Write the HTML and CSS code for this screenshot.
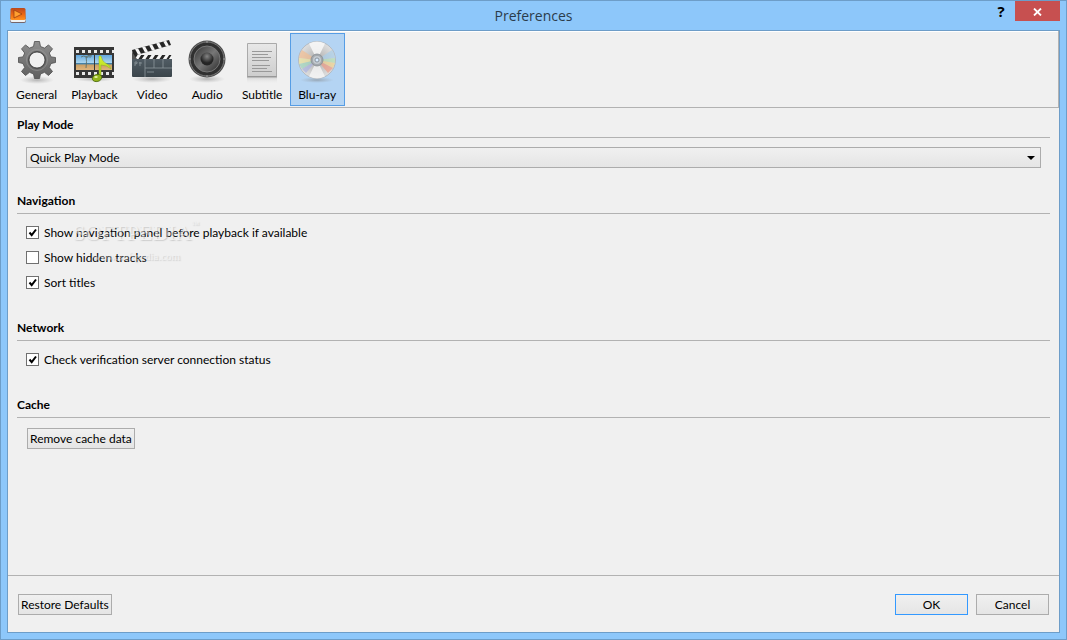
FILE: index.html
```html
<!DOCTYPE html>
<html lang="en">
<head>
  <meta charset="UTF-8" />
  <meta name="viewport" content="width=device-width, initial-scale=1.0"/>
  <title>Preferences</title>
  <link rel="stylesheet" href="styles.css">
</head>
<body>
  <header class="titlebar">
    <svg class="app-icon" width="18" height="18" viewBox="0 0 18 18">
      <defs>
        <linearGradient id="appFill" x1="0" y1="0" x2="0" y2="1">
          <stop offset="0" stop-color="#b9481f"/><stop offset="0.55" stop-color="#ee6a12"/><stop offset="1" stop-color="#ff9420"/>
        </linearGradient>
      </defs>
      <path d="M2 4h14l1 11q0 2-2 2H3q-2 0-2-2z" fill="#75656a"/>
      <path d="M1.500 13h15v1.500q0 1.500-1.500 1.500H3q-1.500 0-1.500-1.500z" fill="#eef2f4"/>
      <rect x="1.500" y="2" width="15" height="12" rx="1.500" fill="url(#appFill)"/>
      <path d="M5 4v8l8-4z" fill="#ffa030" stroke="#92380f" stroke-width=".7"/>
    </svg>
    <h1 class="title">Preferences</h1>
    <div class="window-buttons">
      <button class="help" aria-label="Help">?</button>
      <button class="close" aria-label="Close">
        <svg width="9" height="8" viewBox="0 0 9 8"><path d="M1 .5l7 7M8 .5l-7 7" stroke="#fff" stroke-width="1.800"/></svg>
      </button>
    </div>
  </header>

  <main class="client">
    <nav class="toolbar">
      <button class="tab">
        <svg width="44" height="48" viewBox="0 0 44 48">
          <defs>
            <linearGradient id="steel" x1="0" y1="0" x2="0" y2="1"><stop offset="0" stop-color="#8f8f8f"/><stop offset="1" stop-color="#5f5f5f"/></linearGradient>
            <radialGradient id="shade"><stop offset="0" stop-color="#777" stop-opacity=".5"/><stop offset="1" stop-color="#999" stop-opacity="0"/></radialGradient>
          </defs>
          <ellipse cx="22" cy="43" rx="17" ry="4" fill="url(#shade)"/>
          <path d="M19.500 4.500h5l1 5 4 1.600 4-3.200 4 4-3.200 4.100 1.700 3.900 4.500.6v5l-4.500 1-1.700 4 3.200 4-4 4-4-3.200-4 1.700-1 4.500h-5l-1-4.500-4-1.700-4 3.200-4-4 3.200-4-1.700-4-4.500-1v-5l4.500-.6 1.700-3.900-3.200-4.100 4-4 4 3.200 4-1.600zM22 15a8 8 0 1 0 0 16a8 8 0 1 0 0-16z" fill="url(#steel)" stroke="#4d4d4d" stroke-width=".8" fill-rule="evenodd"/>
          <circle cx="22" cy="23" r="8.500" fill="none" stroke="#4d4d4d"/>
          <circle cx="22" cy="23" r="10.500" fill="none" stroke="#a0a0a0" stroke-opacity=".5"/>
        </svg>
        <span>General</span>
      </button>
      <button class="tab">
        <svg width="44" height="48" viewBox="0 0 44 48">
          <defs>
            <linearGradient id="sky" x1="0" y1="0" x2="0" y2="1"><stop offset="0" stop-color="#64a8df"/><stop offset=".5" stop-color="#a8d4ee"/><stop offset=".56" stop-color="#3c7fab"/><stop offset=".68" stop-color="#cca167"/><stop offset="1" stop-color="#dfb57d"/></linearGradient>
            <linearGradient id="note" x1="0" y1="0" x2="0" y2="1"><stop offset="0" stop-color="#d8f532"/><stop offset="1" stop-color="#a5cc1e"/></linearGradient>
          </defs>
          <ellipse cx="22" cy="42" rx="20" ry="3" fill="url(#shade)"/>
          <path d="M2 10h40v31H2z" fill="#363636"/>
          <path d="M4 14.500h38M4 36.500h38" stroke="#e8e8e8" stroke-width="3" stroke-dasharray="3 3"/>
          <path d="M4 18h18v15H4zM23 18h17v15H23z" fill="url(#sky)"/>
          <path d="M14 31q1-7 0-12M9 20q3-2 5 0q3-3 6-1M19 20q-3-1-5 1" fill="none" stroke="#5d6f6a" stroke-width=".9"/>
          <path d="M27 19h2q1 6 6 8q3 1 4 5q-4-4-10-4v12h-2z" fill="url(#note)" stroke="#8caf20" stroke-width=".5"/>
          <ellipse cx="25" cy="41" rx="4.800" ry="3.500" fill="#94b41c" stroke="#4d6b0d" stroke-width=".8" transform="rotate(-15 25 41)"/>
          <ellipse cx="24" cy="40" rx="1.800" ry="1" fill="#e7f5a1"/>
        </svg>
        <span>Playback</span>
      </button>
      <button class="tab">
        <svg width="44" height="48" viewBox="0 0 44 48">
          <defs>
            <linearGradient id="slate" x1="0" y1="0" x2="0" y2="1"><stop offset="0" stop-color="#56626a"/><stop offset="1" stop-color="#3b454b"/></linearGradient>
            <clipPath id="armTop"><path d="M2 13L39 3l2 5L3 19z"/></clipPath>
            <clipPath id="armLow"><path d="M2 18h40v4H2z"/></clipPath>
          </defs>
          <ellipse cx="22" cy="42" rx="20" ry="4" fill="url(#shade)"/>
          <path d="M2 18h40v21q0 1-1 1H3q-1 0-1-1z" fill="url(#slate)"/>
          <g clip-path="url(#armTop)">
            <path d="M0 0h44v20H0z" fill="#262626"/>
            <path d="M5 9l5 9M12 7l5 9M19 5l5 9M26 3l5 9M33 1l5 9" stroke="#f5f5f5" stroke-width="3"/>
          </g>
          <g clip-path="url(#armLow)">
            <path d="M0 17h44v6H0z" fill="#262626"/>
            <path d="M6 23l4-6M13 23l4-6M20 23l4-6M27 23l4-6M34 23l4-6M40 23l4-6" stroke="#f5f5f5" stroke-width="3"/>
          </g>
          <path d="M2 15l5 7H2z" fill="#555"/>
          <path d="M15 22v18M15 31h27M24 22v9M33 22v9" stroke="#8d989d" stroke-width=".8"/>
          <path d="M5 29v-4h2q1 2-2 2M10 25v4M9 26h3M17 35h7" fill="none" stroke="#8d989d" stroke-width=".8"/>
        </svg>
        <span>Video</span>
      </button>
      <button class="tab">
        <svg width="44" height="48" viewBox="0 0 44 48">
          <defs>
            <linearGradient id="cone" x1="0" y1="0" x2="1" y2="1"><stop offset="0" stop-color="#333"/><stop offset=".5" stop-color="#777"/><stop offset="1" stop-color="#292929"/></linearGradient>
            <radialGradient id="cap" cy=".3"><stop offset="0" stop-color="#858585"/><stop offset="1" stop-color="#252525"/></radialGradient>
          </defs>
          <ellipse cx="22" cy="42" rx="18" ry="4" fill="url(#shade)"/>
          <circle cx="22" cy="22" r="18.500" fill="#4c4c4c"/>
          <circle cx="22" cy="22" r="17" fill="#303030" stroke="#888" stroke-width=".8"/>
          <circle cx="22" cy="22" r="13" fill="url(#cone)" stroke="#777"/>
          <circle cx="22" cy="22" r="6.500" fill="url(#cap)"/>
          <g fill="#aaa"><circle cx="22" cy="5" r=".8"/><circle cx="22" cy="39" r=".8"/><circle cx="5" cy="22" r=".8"/><circle cx="39" cy="22" r=".8"/></g>
        </svg>
        <span>Audio</span>
      </button>
      <button class="tab">
        <svg width="44" height="48" viewBox="0 0 44 48">
          <defs>
            <linearGradient id="paper" x1="0" y1="0" x2="0" y2="1"><stop offset="0" stop-color="#e8e8e8"/><stop offset="1" stop-color="#cdcdcd"/></linearGradient>
            <linearGradient id="reflect" x1="0" y1="0" x2="0" y2="1"><stop offset="0" stop-color="#ccc" stop-opacity=".6"/><stop offset="1" stop-color="#eee" stop-opacity="0"/></linearGradient>
          </defs>
          <path d="M7 41h30v6H7z" fill="url(#reflect)"/>
          <path d="M7.500 6.500h29v33h-29z" fill="url(#paper)" stroke="#aaa"/>
          <path d="M7 40h30" stroke="#858585"/>
          <path d="M12 14.500h20M12 17.500h16M12 20.500h19M12 23.500h17M12 28.500h18M12 31.500h15M12 34.500h20" stroke="#999"/>
        </svg>
        <span>Subtitle</span>
      </button>
      <button class="tab active" aria-pressed="true">
        <svg width="44" height="48" viewBox="0 0 44 48">
          <defs>
            <radialGradient id="disc"><stop offset="0" stop-color="#adadad"/><stop offset="1" stop-color="#dfdfdf"/></radialGradient>
          </defs>
          <ellipse cx="22" cy="43" rx="17" ry="3" fill="url(#shade)"/>
          <circle cx="22" cy="23" r="18.500" fill="url(#disc)" stroke="#aeb3b8" stroke-width=".8"/>
          <path d="M22 23L14 6.500q8-4 16 0z" fill="#f8f8f8" fill-opacity=".85"/>
          <path d="M22 23l-8 16.500q8 4 16 0z" fill="#f8f8f8" fill-opacity=".75"/>
          <g fill-opacity=".7">
            <path d="M22 23L7 13q-3 4-3 8z" fill="#f2bd91"/><path d="M22 23L4 21v6z" fill="#ede4a0"/><path d="M22 23L4 27l3 5z" fill="#9fd6bd"/><path d="M22 23L7 32l4 4z" fill="#a9b2df"/>
            <path d="M22 23l15-10q3 4 3 8z" fill="#a9cfe9"/><path d="M22 23l18-2v5z" fill="#b5dfb5"/><path d="M22 23l18 3-2 5z" fill="#f1d38e"/><path d="M22 23l16 8-5 5z" fill="#ed9b86"/>
          </g>
          <circle cx="22" cy="23" r="6" fill="#a3a8ad" stroke="#878d92" stroke-width=".8"/>
          <circle cx="22" cy="23" r="4" fill="#c3c9cf"/>
          <circle cx="22" cy="23" r="2" fill="#d7ebff" stroke="#7c858e" stroke-width=".8"/>
        </svg>
        <span>Blu-ray</span>
      </button>
    </nav>

    <form class="settings" id="settings">
      <section>
        <h2><label for="playMode">Play Mode</label></h2>
        <div class="field">
          <select id="playMode">
            <option>Quick Play Mode</option>
            <option>Full Play Mode</option>
          </select>
        </div>
      </section>

      <section>
        <h2>Navigation</h2>
        <div class="checks">
          <label><input type="checkbox" checked> Show navigation panel before playback if available</label>
          <label><input type="checkbox"> Show hidden tracks</label>
          <label><input type="checkbox" checked> Sort titles</label>
          <div class="watermark">
            <div class="brand">SOFTPEDIA<sup>™</sup></div>
            <div class="site">www.softpedia.com</div>
          </div>
        </div>
      </section>

      <section>
        <h2>Network</h2>
        <div class="checks">
          <label><input type="checkbox" checked> Check verification server connection status</label>
        </div>
      </section>

      <section>
        <h2>Cache</h2>
        <div class="field">
          <button type="button" class="btn">Remove cache data</button>
        </div>
      </section>
    </form>

    <footer class="actions">
      <button class="btn">Restore Defaults</button>
      <button class="btn wide default">OK</button>
      <button class="btn wide">Cancel</button>
    </footer>
  </main>
</body>
</html>
```
FILE: styles.css
```css
:root {
  --frame: #8dc7fa;
  --frame-line: #6d9dc8;
  --panel: #f0f0f0;
  --line: #b2b2b2;
}

* {
  box-sizing: border-box;
}

body {
  margin: 0;
  min-height: 100vh;
  display: flex;
  flex-direction: column;
  padding: 0 6px 6px;
  border: 1px solid var(--frame-line);
  background: var(--frame);
  color: #000;
  font-family: Lato, "Open Sans", sans-serif;
  font-size: 12px;
}

button, select, input {
  font: inherit;
  color: inherit;
}

.titlebar {
  display: grid;
  grid-template-columns: 1fr auto 1fr;
  height: 29px;
}

.app-icon {
  margin: 5px 2px;
}

.title {
  margin: 0;
  font-family: "Open Sans", sans-serif;
  font-size: 14px;
  font-weight: normal;
  line-height: 29px;
  color: #2b3c4b;
}

.window-buttons {
  display: flex;
  justify-content: flex-end;
  align-items: flex-start;
}

.window-buttons button {
  height: 20px;
  padding: 0;
  border: none;
}

.window-buttons .help {
  width: 28px;
  background: none;
  font-family: "Open Sans", sans-serif;
  font-size: 15px;
  font-weight: bold;
  line-height: 20px;
}

.window-buttons .close {
  width: 45px;
  background: #c75050;
}

.client {
  flex: 1;
  display: flex;
  flex-direction: column;
  border: 1px solid var(--frame-line);
  background: var(--panel);
}

.toolbar {
  display: flex;
  padding: 2px 1px 1px;
  border-right: 1px solid var(--line);
  border-bottom: 1px solid var(--line);
  box-shadow: inset 0 1px #fff;
}

.tab {
  display: flex;
  flex-direction: column;
  align-items: center;
  min-width: 55px;
  height: 73px;
  padding: 3px 6px 0;
  border: 1px solid transparent;
  background: none;
}

.tab svg {
  margin: 0 -2px;
}

.tab span {
  line-height: 19px;
}

.tab.active {
  border-color: #569de5;
  background: #b4d4f3;
}

.settings {
  flex: 1;
  padding: 8px 9px;
}

h2 {
  margin: 0;
  height: 22px;
  border-bottom: 1px solid var(--line);
  font-size: 12px;
  line-height: 18px;
}

.field {
  padding: 9px 9px 24px;
}

select {
  display: block;
  width: 100%;
  height: 21px;
  padding: 0 3px;
  border: 1px solid #acacac;
  border-radius: 0;
  appearance: none;
  background:
    url("data:image/svg+xml,%3Csvg xmlns='http://www.w3.org/2000/svg' width='8' height='4'%3E%3Cpath d='M0 0h8L4 4z'/%3E%3C/svg%3E") right 5px center no-repeat,
    linear-gradient(#f0f0f0, #e5e5e5);
}

.checks {
  position: relative;
  padding: 6px 9px 24px;
}

.checks label {
  display: flex;
  align-items: center;
  gap: 5px;
  width: fit-content;
  height: 25px;
}

input[type="checkbox"] {
  appearance: none;
  width: 13px;
  height: 13px;
  margin: 0;
  border: 1px solid #707070;
  background: #fff;
}

input[type="checkbox"]:checked {
  background: #fff url("data:image/svg+xml,%3Csvg xmlns='http://www.w3.org/2000/svg' width='11' height='11'%3E%3Cpath d='M2.500 5.500l2.200 2.700L9 2.500' fill='none' stroke='%23000' stroke-width='2'/%3E%3C/svg%3E") center no-repeat;
}

.watermark {
  position: absolute;
  top: 7px;
  left: 56px;
  color: #f3f3f3;
  font-family: "Liberation Serif", serif;
  opacity: 0.5;
  text-align: center;
  text-shadow: 1px 1px 1px #aaa;
  pointer-events: none;
}

.brand {
  font-size: 22px;
  line-height: 24px;
}

.brand sup {
  font-size: 8px;
  line-height: 8px;
  vertical-align: top;
}

.site {
  font-size: 11px;
  line-height: 22px;
}

.btn {
  height: 21px;
  padding: 0 2px;
  border: 1px solid #acacac;
  background: linear-gradient(#f0f0f0, #e5e5e5);
}

.field .btn {
  margin: 1px;
}

.btn.wide {
  width: 73px;
}

.btn.default {
  border-color: #3399ff;
}

.actions {
  display: flex;
  gap: 8px;
  padding: 18px 10px 17px;
  border-top: 1px solid var(--line);
}

.actions .btn:first-child {
  margin-right: auto;
}
```
